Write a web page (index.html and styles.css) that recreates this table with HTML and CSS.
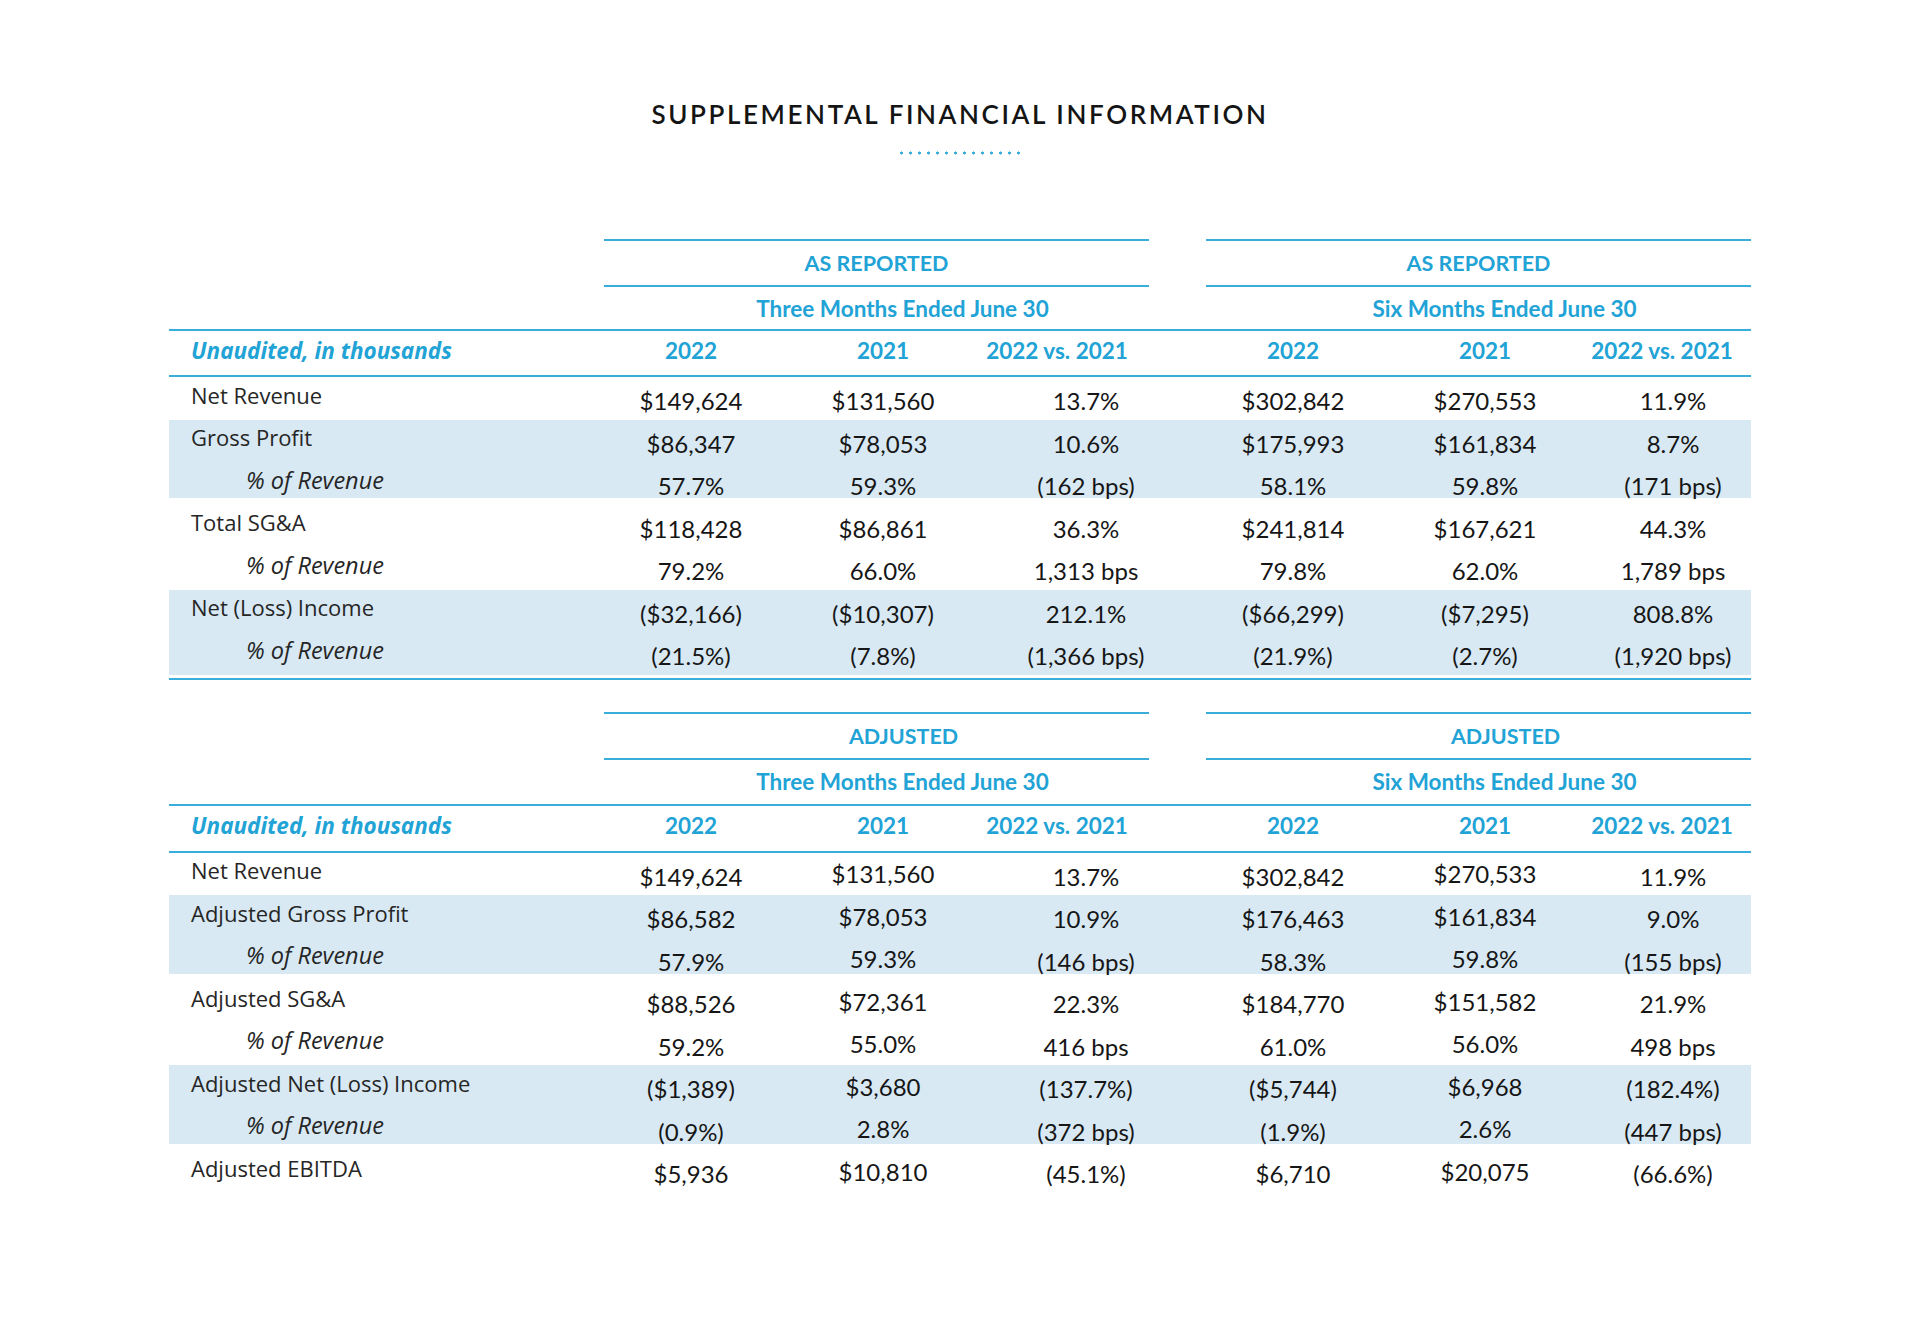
FILE: index.html
```html
<!DOCTYPE html>
<html lang="en">
<head>
    <meta charset="UTF-8">
    <title>Supplemental Financial Information</title>
    <link rel="stylesheet" href="styles.css">
</head>
<body>
    <div class="page">
        <h1 class="title">SUPPLEMENTAL FINANCIAL INFORMATION</h1>
        <div class="dots"></div>

        <!-- as reported -->
        <section class="report closed">
            <div class="grid">
                <div class="group">
                    <div class="group-title">AS REPORTED</div>
                    <div class="group-sub">Three Months Ended June 30</div>
                </div>
                <div class="group right">
                    <div class="group-title">AS REPORTED</div>
                    <div class="group-sub">Six Months Ended June 30</div>
                </div>
            </div>
            <div class="grid head">
                <div class="caption">Unaudited, in thousands</div>
                <div>2022</div><div>2021</div><div>2022 vs. 2021</div>
                <div>2022</div><div>2021</div><div>2022 vs. 2021</div>
            </div>
            <div class="rows">
                <div class="grid row">
                    <div class="label">Net Revenue</div>
                    <div class="num">$149,624</div><div class="num">$131,560</div><div class="num vs">13.7%</div>
                    <div class="num">$302,842</div><div class="num">$270,553</div><div class="num vs">11.9%</div>
                </div>
                <div class="grid row band">
                    <div class="label">Gross Profit</div>
                    <div class="num">$86,347</div><div class="num">$78,053</div><div class="num vs">10.6%</div>
                    <div class="num">$175,993</div><div class="num">$161,834</div><div class="num vs">8.7%</div>
                </div>
                <div class="grid row band cut">
                    <div class="label sub">% of Revenue</div>
                    <div class="num">57.7%</div><div class="num">59.3%</div><div class="num vs">(162 bps)</div>
                    <div class="num">58.1%</div><div class="num">59.8%</div><div class="num vs">(171 bps)</div>
                </div>
                <div class="grid row">
                    <div class="label">Total SG&amp;A</div>
                    <div class="num">$118,428</div><div class="num">$86,861</div><div class="num vs">36.3%</div>
                    <div class="num">$241,814</div><div class="num">$167,621</div><div class="num vs">44.3%</div>
                </div>
                <div class="grid row">
                    <div class="label sub">% of Revenue</div>
                    <div class="num">79.2%</div><div class="num">66.0%</div><div class="num vs">1,313 bps</div>
                    <div class="num">79.8%</div><div class="num">62.0%</div><div class="num vs">1,789 bps</div>
                </div>
                <div class="grid row band">
                    <div class="label">Net (Loss) Income</div>
                    <div class="num">($32,166)</div><div class="num">($10,307)</div><div class="num vs">212.1%</div>
                    <div class="num">($66,299)</div><div class="num">($7,295)</div><div class="num vs">808.8%</div>
                </div>
                <div class="grid row band">
                    <div class="label sub">% of Revenue</div>
                    <div class="num">(21.5%)</div><div class="num">(7.8%)</div><div class="num vs">(1,366 bps)</div>
                    <div class="num">(21.9%)</div><div class="num">(2.7%)</div><div class="num vs">(1,920 bps)</div>
                </div>
            </div>
        </section>

        <!-- adjusted -->
        <section class="report adjusted">
            <div class="grid">
                <div class="group">
                    <div class="group-title">ADJUSTED</div>
                    <div class="group-sub">Three Months Ended June 30</div>
                </div>
                <div class="group right">
                    <div class="group-title">ADJUSTED</div>
                    <div class="group-sub">Six Months Ended June 30</div>
                </div>
            </div>
            <div class="grid head">
                <div class="caption">Unaudited, in thousands</div>
                <div>2022</div><div>2021</div><div>2022 vs. 2021</div>
                <div>2022</div><div>2021</div><div>2022 vs. 2021</div>
            </div>
            <div class="rows">
                <div class="grid row">
                    <div class="label">Net Revenue</div>
                    <div class="num">$149,624</div><div class="num up">$131,560</div><div class="num vs">13.7%</div>
                    <div class="num">$302,842</div><div class="num up">$270,533</div><div class="num vs">11.9%</div>
                </div>
                <div class="grid row band">
                    <div class="label">Adjusted Gross Profit</div>
                    <div class="num">$86,582</div><div class="num up">$78,053</div><div class="num vs">10.9%</div>
                    <div class="num">$176,463</div><div class="num up">$161,834</div><div class="num vs">9.0%</div>
                </div>
                <div class="grid row band cut">
                    <div class="label sub">% of Revenue</div>
                    <div class="num">57.9%</div><div class="num up">59.3%</div><div class="num vs">(146 bps)</div>
                    <div class="num">58.3%</div><div class="num up">59.8%</div><div class="num vs">(155 bps)</div>
                </div>
                <div class="grid row">
                    <div class="label">Adjusted SG&amp;A</div>
                    <div class="num">$88,526</div><div class="num up">$72,361</div><div class="num vs">22.3%</div>
                    <div class="num">$184,770</div><div class="num up">$151,582</div><div class="num vs">21.9%</div>
                </div>
                <div class="grid row">
                    <div class="label sub">% of Revenue</div>
                    <div class="num">59.2%</div><div class="num up">55.0%</div><div class="num vs">416 bps</div>
                    <div class="num">61.0%</div><div class="num up">56.0%</div><div class="num vs">498 bps</div>
                </div>
                <div class="grid row band">
                    <div class="label">Adjusted Net (Loss) Income</div>
                    <div class="num">($1,389)</div><div class="num up">$3,680</div><div class="num vs">(137.7%)</div>
                    <div class="num">($5,744)</div><div class="num up">$6,968</div><div class="num vs">(182.4%)</div>
                </div>
                <div class="grid row band cut">
                    <div class="label sub">% of Revenue</div>
                    <div class="num">(0.9%)</div><div class="num up">2.8%</div><div class="num vs">(372 bps)</div>
                    <div class="num">(1.9%)</div><div class="num up">2.6%</div><div class="num vs">(447 bps)</div>
                </div>
                <div class="grid row">
                    <div class="label">Adjusted EBITDA</div>
                    <div class="num">$5,936</div><div class="num up">$10,810</div><div class="num vs">(45.1%)</div>
                    <div class="num">$6,710</div><div class="num up">$20,075</div><div class="num vs">(66.6%)</div>
                </div>
            </div>
        </section>
    </div>
</body>
</html>
```

FILE: styles.css
```css
:root {
    --teal: #22a3d6;
    --line: #3aaedb;
    --band: #d8e9f4;
    --ink: #161616;
}

* {
    box-sizing: border-box;
    margin: 0;
    padding: 0;
}

body {
    background: #ffffff;
    font-family: 'Lato', 'Open Sans', Arial, sans-serif;
    color: var(--ink);
}

.page {
    width: 1582px;
    margin: 0 auto;
    padding: 99px 0 120px;
}

.title {
    text-align: center;
    font-size: 26px;
    line-height: 30px;
    font-weight: 600;
    letter-spacing: 2.6px;
    color: #141414;
}

.dots {
    width: 126px;
    height: 4px;
    margin: 22px auto 0;
    background-image: radial-gradient(circle, var(--line) 1.3px, transparent 1.8px);
    background-size: 9px 4px;
}

.report {
    margin-top: 84px;
}

.report + .report {
    margin-top: 32px;
}

.grid {
    display: grid;
    grid-template-columns: 435px 174px 210px 161px 57px 174px 210px 161px;
}

/* spacer column between the two groups */
.head > :nth-child(5),
.row > :nth-child(5) {
    grid-column: 6;
}

.group {
    grid-column: 2 / 5;
}

.group.right {
    grid-column: 6 / 9;
}

.group-title,
.group-sub {
    display: flex;
    align-items: center;
    justify-content: center;
    font-weight: 700;
    color: var(--teal);
    white-space: nowrap;
}

.group-title {
    height: 48px;
    font-size: 21.5px;
    border-top: 2px solid var(--line);
    border-bottom: 2px solid var(--line);
}

.group-sub {
    height: 42px;
    font-size: 22.5px;
    padding-left: 52px;
}

.adjusted .group-title {
    padding-left: 54px;
}

.adjusted .group-sub {
    height: 44px;
}

.head {
    height: 48px;
    border-top: 2px solid var(--line);
    border-bottom: 2px solid var(--line);
    align-items: center;
    font-weight: 700;
    font-size: 22.5px;
    color: var(--teal);
    padding-bottom: 5px;
}

.adjusted .head {
    height: 49px;
}

.head > div {
    display: flex;
    justify-content: center;
    white-space: nowrap;
}

.head > .caption {
    justify-content: flex-start;
    font-family: 'Open Sans', 'Lato', sans-serif;
    font-style: italic;
    font-size: 22.5px;
    padding-left: 22px;
}

.head > :nth-child(4) {
    padding-right: 23px;
}

.head > :nth-child(7) {
    padding-right: 17px;
}

.closed .rows {
    padding-bottom: 3px;
    border-bottom: 2px solid var(--line);
}

.row {
    height: 42.5px;
    align-items: center;
}

.band {
    background: var(--band);
}

/* bands that stop short of the next row */
.band.cut {
    background: linear-gradient(var(--band) 36px, transparent 36px);
}

.label {
    font-family: 'Open Sans', 'Lato', sans-serif;
    font-size: 22px;
    color: #262626;
    padding-left: 22px;
    padding-bottom: 7px;
    white-space: nowrap;
}

.label.sub {
    font-style: italic;
    font-size: 23.5px;
    padding-left: 77px;
}

.num {
    display: flex;
    justify-content: center;
    white-space: nowrap;
    font-size: 24px;
    padding-top: 5px;
}

.num.up {
    padding-top: 0;
}

/* change column values sit right of their header */
.row > :nth-child(4) {
    padding-left: 35px;
}

.row > :nth-child(7) {
    padding-left: 5px;
}
```
